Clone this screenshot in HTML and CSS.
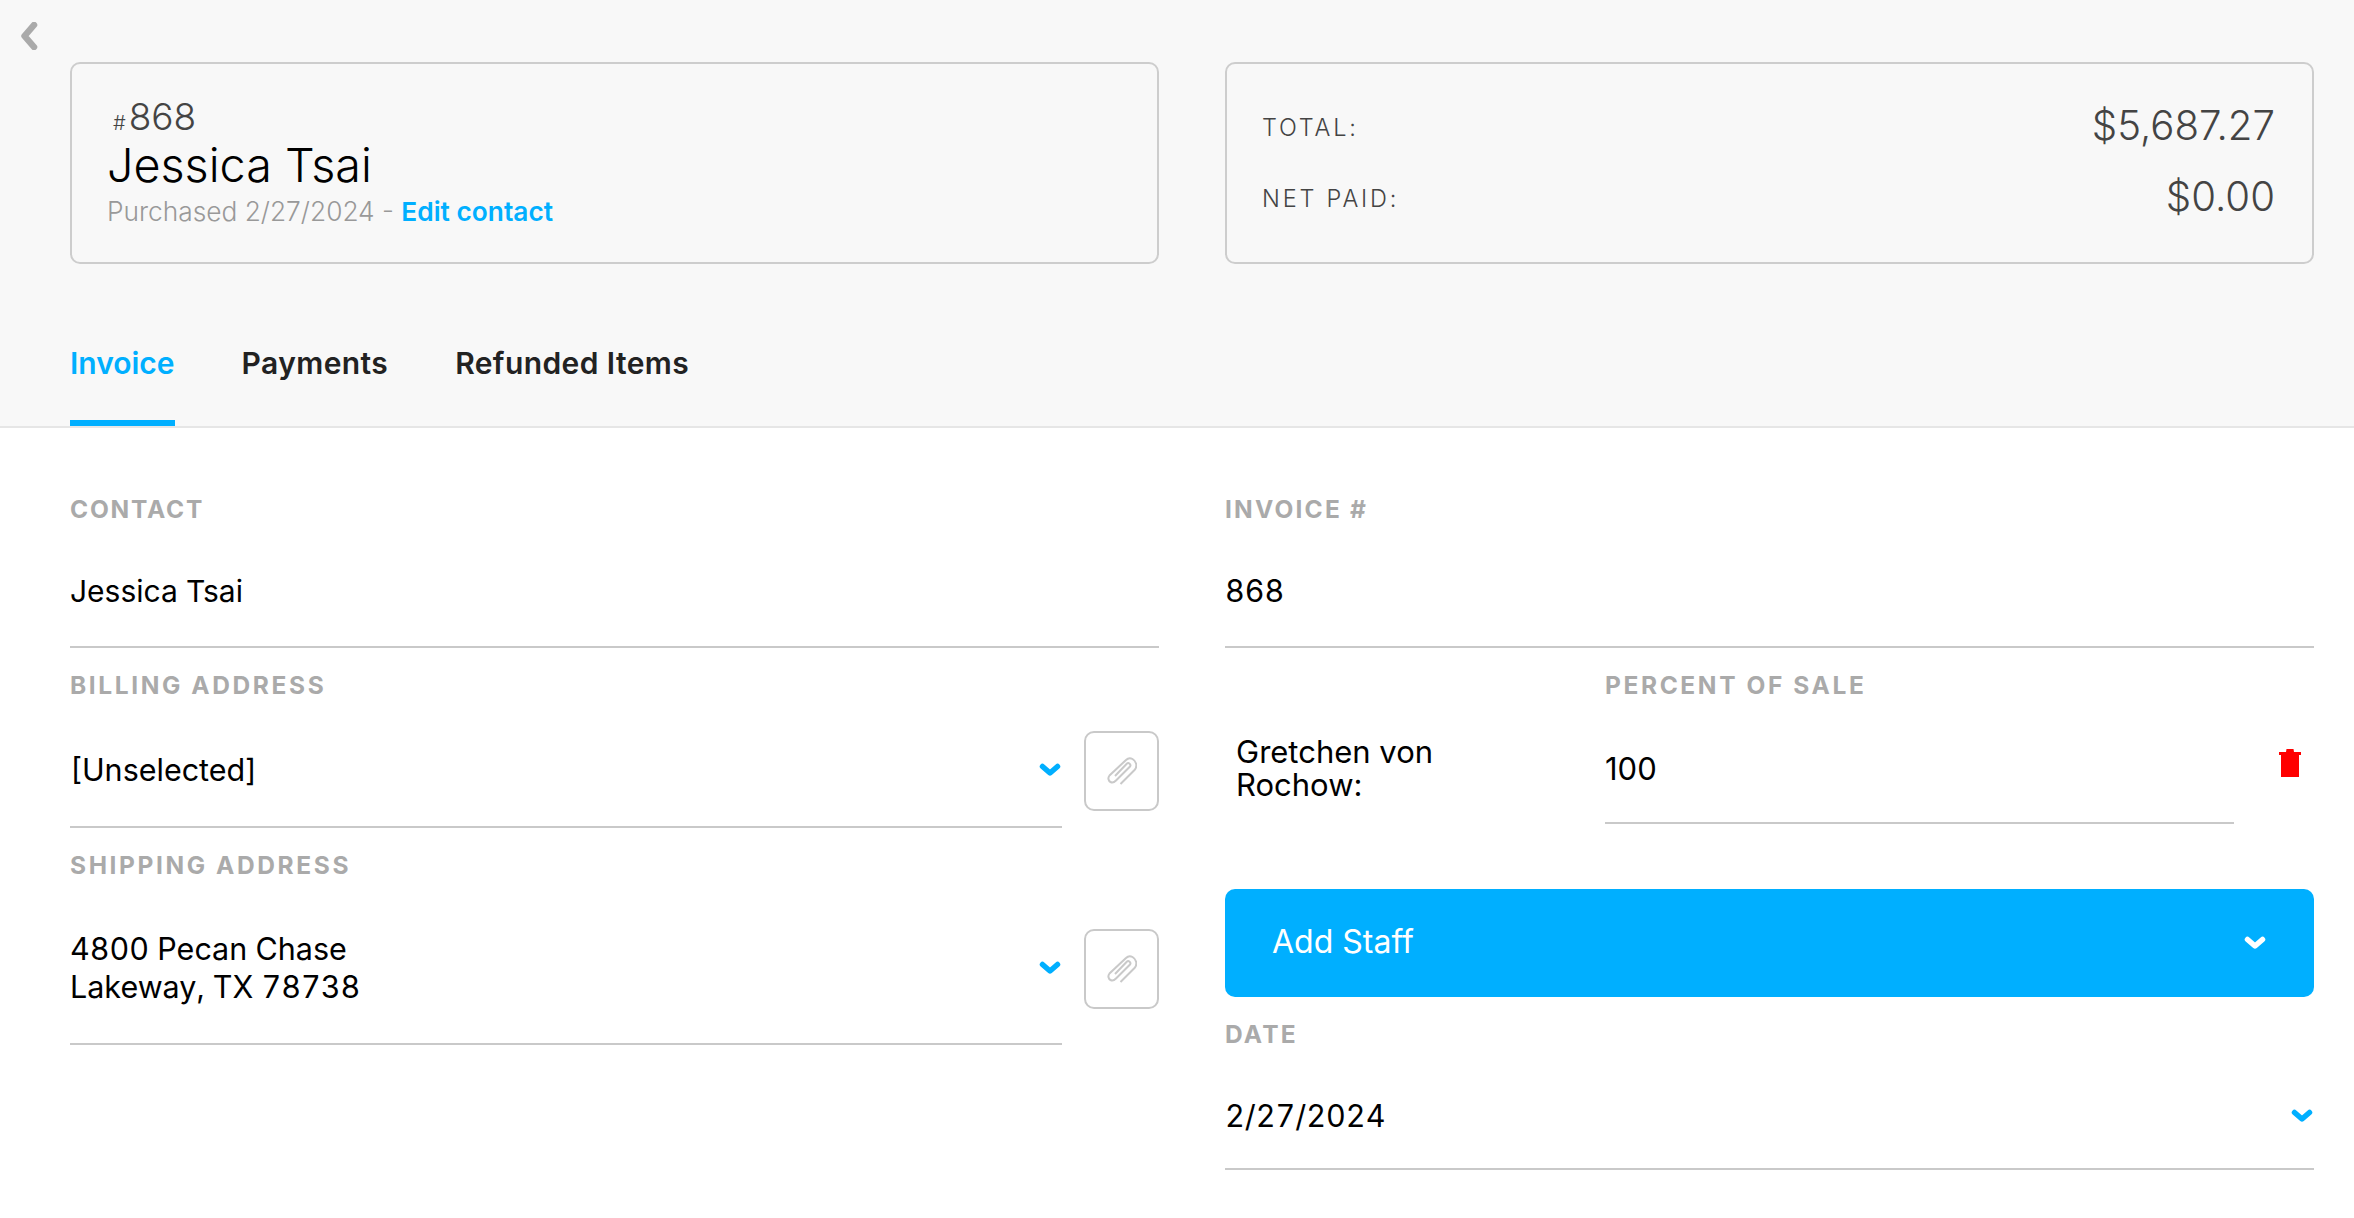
FILE: index.html
```html
<!DOCTYPE html>
<html lang="en">
<head>
<meta charset="utf-8">
<title>Invoice 868</title>
<link rel="stylesheet" href="styles.css">
</head>
<body>
<header class="top">
  <a class="back" href="#"><svg width="20" height="28" viewBox="0 0 20 28"><path d="M15 3 5.500 14 15 25" fill="none" stroke="#aaa" stroke-width="6.500" stroke-linecap="round" stroke-linejoin="round"/></svg></a>
  <div class="cards">
    <section class="card card-id">
      <div class="num"><span class="hash">#</span>868</div>
      <h1 class="name">Jessica Tsai</h1>
      <div class="meta">Purchased 2/27/2024 - <a class="link" href="#">Edit contact</a></div>
    </section>
    <section class="card card-sum">
      <div class="sum-row"><span class="sum-label">TOTAL:</span><span class="sum-val">$5,687.27</span></div>
      <div class="sum-row"><span class="sum-label">NET PAID:</span><span class="sum-val">$0.00</span></div>
    </section>
  </div>
  <nav class="tabs">
    <a class="tab active" href="#">Invoice</a>
    <a class="tab" href="#">Payments</a>
    <a class="tab" href="#">Refunded Items</a>
  </nav>
</header>
<main class="form">
  <div class="col">
    <div class="label l-tight">CONTACT</div>
    <div class="field f-contact f-name">Jessica Tsai</div>
    <div class="label l-next">BILLING ADDRESS</div>
    <div class="addr-row">
      <div class="field f-addr f-billing"><span>[Unselected]</span>
        <svg class="chev" viewBox="0 0 24 14"><path d="M4.500 3.500 12 10 19.500 3.500" fill="none" stroke="#00afff" stroke-width="5.500" stroke-linecap="round" stroke-linejoin="round"/></svg></div>
      <button class="clip"><svg width="30" height="28" viewBox="0 0 30 28"><path d="M13.500 27 27.500 13C31 9 29 4 25.500 2 23 .5 20.500 1.500 19 3L2.500 18.500C.5 21 1.500 24 3.500 25 5.500 26 7.500 25 9 23.500L23 9.500C24.500 7.500 21.500 5 20 6.500L8 19" fill="none" stroke="#c9c9c9" stroke-width="2"/></svg></button>
    </div>
    <div class="label l-next">SHIPPING ADDRESS</div>
    <div class="addr-row">
      <div class="field f-addr f-shipping"><span>4800 Pecan Chase<br>Lakeway, TX 78738</span>
        <svg class="chev" viewBox="0 0 24 14"><path d="M4.500 3.500 12 10 19.500 3.500" fill="none" stroke="#00afff" stroke-width="5.500" stroke-linecap="round" stroke-linejoin="round"/></svg></div>
      <button class="clip"><svg width="30" height="28" viewBox="0 0 30 28"><path d="M13.500 27 27.500 13C31 9 29 4 25.500 2 23 .5 20.500 1.500 19 3L2.500 18.500C.5 21 1.500 24 3.500 25 5.500 26 7.500 25 9 23.500L23 9.500C24.500 7.500 21.500 5 20 6.500L8 19" fill="none" stroke="#c9c9c9" stroke-width="2"/></svg></button>
    </div>
  </div>
  <div class="col">
    <div class="label">INVOICE #</div>
    <div class="field f-contact">868</div>
    <div class="staff">
      <div class="staff-name">Gretchen von Rochow:</div>
      <div class="staff-pct">
        <div class="label l-next">PERCENT OF SALE</div>
        <div class="field f-pct">100</div>
      </div>
      <svg class="trash" width="22" height="28" viewBox="0 0 22 28"><path d="M7.500 0H14.500L15 3H22V6H20V28H2V6H0V3H7Z" fill="#f00"/></svg>
    </div>
    <button class="add"><span>Add Staff</span><svg class="chev" viewBox="0 0 24 14"><path d="M4.500 3.500 12 10 19.500 3.500" fill="none" stroke="#fff" stroke-width="5.500" stroke-linecap="round" stroke-linejoin="round"/></svg></button>
    <div class="label l-date">DATE</div>
    <div class="field f-date"><span>2/27/2024</span>
      <svg class="chev" viewBox="0 0 24 14"><path d="M4.500 3.500 12 10 19.500 3.500" fill="none" stroke="#00afff" stroke-width="5.500" stroke-linecap="round" stroke-linejoin="round"/></svg></div>
  </div>
</main>
</body>
</html>
```
FILE: styles.css
```css
* { box-sizing: border-box; }
html, body { margin: 0; height: 100%; }
body { background: #fff; color: #000; font-family: Inter, "Liberation Sans", sans-serif; overflow: hidden; }
a { text-decoration: none; color: inherit; }
button { font-family: inherit; cursor: pointer; }

.top { position: relative; height: 428px; padding: 62px 40px 0 70px; background: #f8f8f8; border-bottom: 2px solid #e6e6e6; }
.back { position: absolute; left: 19px; top: 22px; line-height: 0; }

.cards { display: grid; grid-template-columns: 1fr 1fr; gap: 66px; }
.card { height: 202px; border: 2px solid #cdcdcd; border-radius: 10px; }
.card-id { padding: 36px 0 0 35px; }
.num { padding-left: 6px; font-size: 37px; line-height: 34px; font-weight: 300; color: #444; }
.hash { font-size: 20px; margin-right: 3px; }
.name { margin: -1px 0 0; font-size: 46.700px; line-height: 52px; font-weight: 300; color: #000; }
.meta { margin-top: 5px; font-size: 26.300px; line-height: 32px; font-weight: 300; color: #999; }
.link { color: #00afff; font-weight: 600; }

.card-sum { display: flex; flex-direction: column; justify-content: center; gap: 25px; padding: 0 37px 0 35px; }
.sum-row { display: flex; justify-content: space-between; align-items: center; height: 46px; }
.sum-label { font-size: 23.500px; font-weight: 300; letter-spacing: 2.800px; color: #444; }
.sum-val { margin-bottom: 4px; font-size: 40.200px; font-weight: 300; color: #444; }

.tabs { display: flex; gap: 67px; margin-top: 63px; }
.tab { height: 99px; padding-top: 16px; border-bottom: 6px solid transparent; font-size: 30px; line-height: 40px; font-weight: 600; letter-spacing: .4px; color: #222; }
.tab.active { color: #00afff; border-color: #00afff; letter-spacing: 0; }

.form { display: grid; grid-template-columns: 1fr 1fr; gap: 66px; padding: 66px 40px 0 70px; }
.col { min-width: 0; }
.label { font-size: 24.500px; line-height: 30px; font-weight: 700; letter-spacing: 2.200px; color: #aaa; }
.l-tight { letter-spacing: 1.800px; }
.l-next { margin-top: 22px; letter-spacing: 2.600px; }
.field { display: flex; align-items: center; border-bottom: 2px solid #c9c9c9; font-size: 30.500px; line-height: 38px; font-variant-numeric: tabular-nums; }
.f-contact { height: 124px; padding-top: 12px; }
.f-name { font-size: 30px; }
.addr-row { display: flex; align-items: flex-start; gap: 22px; }
.f-addr { flex: 1; justify-content: space-between; }
.f-billing { height: 128px; padding-top: 13px; }
.f-shipping { height: 165px; padding-top: 12px; }
.chev { width: 24px; height: 14px; flex: none; }
.clip { display: flex; align-items: center; justify-content: center; flex: none; width: 75px; height: 80px; margin-top: 31px; padding: 0; background: #fff; border: 2px solid #c9c9c9; border-radius: 10px; }
.f-shipping + .clip { margin-top: 49px; }

.staff { display: flex; align-items: flex-start; }
.staff-name { width: 380px; padding: 87px 40px 0 11px; font-size: 31px; line-height: 33px; }
.staff-pct { width: 629px; }
.f-pct { height: 124px; padding-top: 15px; font-size: 31px; font-variant-numeric: normal; }
.trash { margin: 101px 0 0 45px; flex: none; }

.add { display: flex; justify-content: space-between; align-items: center; width: 100%; height: 108px; margin-top: 65px; padding: 0 47px 0 47px; border: 0; border-radius: 10px; background: #00afff; color: #fff; font-size: 32px; font-weight: 400; }
.add span { margin-bottom: 4px; }
.l-date { margin-top: 22px; }
.f-date { justify-content: space-between; height: 121px; padding-top: 14px; }
```
